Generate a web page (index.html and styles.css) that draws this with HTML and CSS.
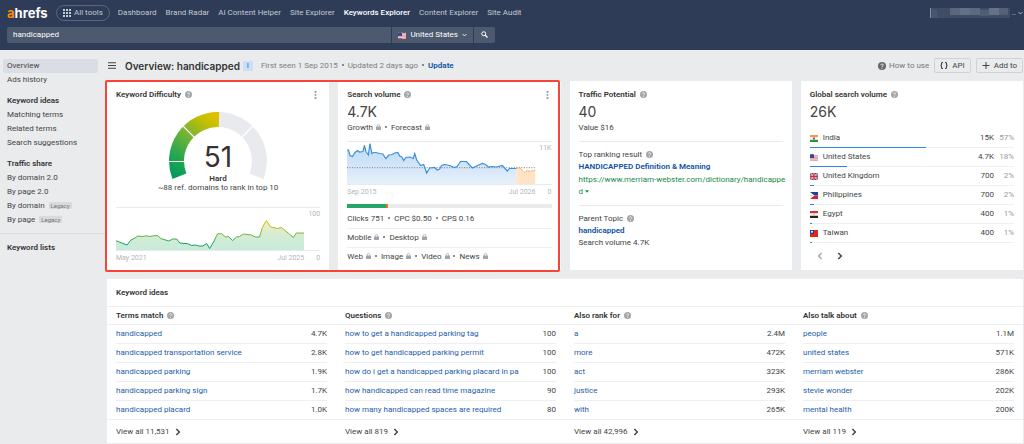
FILE: index.html
```html
<!DOCTYPE html>
<html lang="en">
  <head>
    <meta charset="utf-8">
    <meta name="viewport" content="width=device-width">
    <title>Overview: handicapped</title>
    <link rel="stylesheet" href="styles.css">
  </head>
  <body>
    <svg class="defs" aria-hidden="true">
      <symbol id="help" viewBox="0 0 14 14">
        <circle cx="7" cy="7" r="7" fill="currentColor"/>
        <path d="M4.9 5.6C4.9 2.8 9.2 2.8 9.2 5.5C9.2 7 7 7 7 8.6" fill="none" stroke="#fff" stroke-width="1.5"/>
        <circle cx="7" cy="10.6" r="1" fill="#fff"/>
      </symbol>
      <symbol id="lock" viewBox="0 0 10 12">
        <path d="M2.5 6V3.5a2.5 2.5 0 0 1 5 0V6" fill="none" stroke="currentColor" stroke-width="1.4"/>
        <rect y="5" width="10" height="7" rx="1" fill="currentColor"/>
      </symbol>
      <symbol id="dots" viewBox="0 0 4 14">
        <path d="M.5 0h3v3h-3zM.5 5.500h3v3h-3zM.5 11h3v3h-3z" fill="currentColor"/>
      </symbol>
      <symbol id="next" viewBox="0 0 8 12">
        <path d="M1.500 1.500L6 6L1.500 10.500" fill="none" stroke="currentColor" stroke-width="2.200"/>
      </symbol>
      <symbol id="down" viewBox="0 0 8 6">
        <path d="M1 1.500L4 4.500L7 1.500" fill="none" stroke="currentColor" stroke-width="1.400"/>
      </symbol>
      <symbol id="us" viewBox="0 0 16 14">
        <path d="M0 1Q4-1 8 1T16 1V13Q12 15 8 13T0 13Z" fill="#f3e9ec"/>
        <path d="M8 3.500h8M8 6.500h8M0 9.500h16M0 12.500h16" stroke="#d9606c" stroke-width="1.300"/>
        <path d="M0 1Q4-1 8 1V8H0Z" fill="#3b4a86"/>
      </symbol>
      <symbol id="in" viewBox="0 0 16 14">
        <rect width="16" height="14" fill="#fff"/>
        <rect width="16" height="4.500" fill="#f79a3c"/>
        <rect y="9.500" width="16" height="4.500" fill="#2c9437"/>
        <circle cx="8" cy="7" r="2" fill="#2d3a8c"/>
      </symbol>
      <symbol id="gb" viewBox="0 0 16 14">
        <rect width="16" height="14" fill="#2c3f88"/>
        <path d="M0 0L16 14M16 0L0 14" stroke="#fff" stroke-width="2.400"/>
        <path d="M0 0L16 14M16 0L0 14" stroke="#d22c3c" stroke-width="1"/>
        <path d="M8 0V14M0 7H16" stroke="#fff" stroke-width="4.400"/>
        <path d="M8 0V14M0 7H16" stroke="#d22c3c" stroke-width="3"/>
      </symbol>
      <symbol id="ph" viewBox="0 0 16 14">
        <rect width="16" height="7" fill="#1f3f9f"/>
        <rect y="7" width="16" height="7" fill="#d8202e"/>
        <path d="M0 0L9 7L0 14Z" fill="#fff"/>
        <circle cx="3" cy="7" r="1.600" fill="#f2c230"/>
      </symbol>
      <symbol id="eg" viewBox="0 0 16 14">
        <rect width="16" height="14" fill="#fff"/>
        <rect width="16" height="4.500" fill="#d2303c"/>
        <rect y="9.500" width="16" height="4.500" fill="#222"/>
        <circle cx="8" cy="7" r="1.500" fill="#d9b23c"/>
      </symbol>
      <symbol id="tw" viewBox="0 0 16 14">
        <rect width="16" height="14" fill="#e0261c"/>
        <rect width="8" height="7.500" fill="#2b3a94"/>
        <circle cx="4" cy="3.700" r="2" fill="#fff"/>
      </symbol>
    </svg>

    <header class="top">
      <div class="top-row">
        <a class="logo" href="#"><span>a</span>hrefs</a>
        <button class="all-tools">
          <svg viewBox="0 0 16 16"><path d="M0 0h4v4H0zM6 0h4v4H6zM12 0h4v4h-4zM0 6h4v4H0zM6 6h4v4H6zM12 6h4v4h-4zM0 12h4v4H0zM6 12h4v4H6zM12 12h4v4h-4z" fill="currentColor"/></svg>
          All tools
        </button>
        <nav class="nav">
          <a href="#">Dashboard</a>
          <a href="#">Brand Radar</a>
          <a href="#">AI Content Helper</a>
          <a href="#">Site Explorer</a>
          <a class="active" href="#">Keywords Explorer</a>
          <a href="#">Content Explorer</a>
          <a href="#">Site Audit</a>
        </nav>
        <button class="account" aria-label="Account">
          <svg class="mosaic" viewBox="0 0 80 10">
            <rect width="80" height="10" rx="1" fill="#404d66"/>
            <rect width="1" height="10" fill="#8791a3"/>
            <rect x="2" y="2" width="5" height="8" fill="#4b5770"/>
            <rect x="20" width="10" height="7" fill="#5b667c"/>
            <rect x="30" width="10" height="7" fill="#647085"/>
            <rect x="40" width="10" height="7" fill="#5d697e"/>
            <rect x="50" y="2" width="9" height="6" fill="#505c73"/>
            <rect x="59" width="10" height="7" fill="#667186"/>
            <rect x="69" width="9" height="7" fill="#556178"/>
          </svg>
          <span>..</span>
          <svg class="caret"><use href="#down"/></svg>
        </button>
      </div>
      <form class="search">
        <input type="text" value="handicapped" aria-label="Keyword">
        <button type="button" class="country">
          <svg class="flag"><use href="#us"/></svg>
          United States
          <svg class="caret"><use href="#down"/></svg>
        </button>
        <button type="button" class="go" aria-label="Search">
          <svg viewBox="0 0 14 14"><circle cx="5.500" cy="5.500" r="4" fill="none" stroke="currentColor" stroke-width="2"/><path d="M8.500 8.500L13 13" stroke="currentColor" stroke-width="2.400"/></svg>
        </button>
      </form>
    </header>

    <div class="page">
      <aside class="sidebar">
        <a class="current" href="#">Overview</a>
        <a href="#">Ads history</a>
        <h3>Keyword ideas</h3>
        <a href="#">Matching terms</a>
        <a href="#">Related terms</a>
        <a href="#">Search suggestions</a>
        <h3>Traffic share</h3>
        <a href="#">By domain 2.0</a>
        <a href="#">By page 2.0</a>
        <a href="#">By domain <span class="legacy">Legacy</span></a>
        <a href="#">By page <span class="legacy">Legacy</span></a>
        <hr>
        <h3>Keyword lists</h3>
      </aside>

      <main>
        <div class="title-row">
          <button class="menu" aria-label="Menu">
            <svg viewBox="0 0 16 14"><path d="M0 1.500h16M0 7h16M0 12.500h16" stroke="currentColor" stroke-width="2"/></svg>
          </button>
          <h1>Overview: handicapped</h1>
          <span class="intent">I</span>
          <p class="seen">First seen 1 Sep 2015 <i></i> Updated 2 days ago <i></i> <a href="#">Update</a></p>
          <a class="how" href="#"><svg class="help"><use href="#help"/></svg>How to use</a>
          <button class="btn">
            <svg viewBox="0 0 16 14"><path d="M6 1H5Q3 1 3 3V5Q3 7 1 7Q3 7 3 9V11Q3 13 5 13H6M10 1H11Q13 1 13 3V5Q13 7 15 7Q13 7 13 9V11Q13 13 11 13H10" fill="none" stroke="currentColor" stroke-width="2.200"/></svg>
            API
          </button>
          <button class="btn add">
            <svg viewBox="0 0 14 14"><path d="M7 0V14M0 7H14" stroke="currentColor" stroke-width="2"/></svg>
            Add to
          </button>
        </div>

        <div class="cards">
          <section class="card">
            <h2>Keyword Difficulty <svg class="help"><use href="#help"/></svg></h2>
            <button class="more" aria-label="More"><svg><use href="#dots"/></svg></button>
            <svg class="gauge" viewBox="0 0 98 70">
              <defs>
                <linearGradient id="kd" gradientUnits="userSpaceOnUse" x1="6" y1="64" x2="50" y2="6">
                  <stop offset="0" stop-color="#009b5c"/>
                  <stop offset=".25" stop-color="#27a84f"/>
                  <stop offset=".6" stop-color="#82b530"/>
                  <stop offset=".85" stop-color="#c4c000"/>
                  <stop offset="1" stop-color="#dfc000"/>
                </linearGradient>
              </defs>
              <path d="M50 7.500A41.500 41.500 0 0 1 87.600 64.200" fill="none" stroke="#e9eaed" stroke-width="15"/>
              <path d="M10.400 64.200A41.500 41.500 0 0 1 50 7.500" fill="none" stroke="url(#kd)" stroke-width="15"/>
              <path d="M0 49.500H16M14 14L26 26M84 14L72 26" stroke="#fff" stroke-width="1.200"/>
              <text class="score" x="49" y="55">51</text>
              <text class="level" x="49" y="69">Hard</text>
            </svg>
            <p class="refs">~88 ref. domains to rank in top 10</p>
            <div class="chart">
              <svg viewBox="0 0 189 42" preserveAspectRatio="none">
                <defs>
                  <linearGradient id="kdline" gradientUnits="userSpaceOnUse" x1="0" y1="12" x2="0" y2="40">
                    <stop offset="0" stop-color="#e2bf00"/>
                    <stop offset=".35" stop-color="#9aba28"/>
                    <stop offset=".6" stop-color="#58b044"/>
                    <stop offset=".85" stop-color="#0ba05d"/>
                  </linearGradient>
                  <linearGradient id="kdarea" x1="0" y1="0" x2="0" y2="1">
                    <stop offset="0" stop-color="#f6eec0"/>
                    <stop offset=".5" stop-color="#d5ecd3"/>
                    <stop offset="1" stop-color="#c8eadc"/>
                  </linearGradient>
                </defs>
                <path d="M0 32.700L11 37L15 32L19 30L22 28L27 28.500L30 27.700L34 28.500L38 27.700H42L45 30.500L53 33L57 31H61L64 35L72 35.700L76 37.500L80 37L83 38H87L91 35.500L94 40.500L98 34L102 25.700H106L110 29L113 28.500L117 32.500L121 29L124 28.500L128 26L136 27L140 29H144L147 19.500L151 12.500L155 18.700L162 20.500L166 19.500L174 26L178 29.500L181 25H189V42H0Z" fill="url(#kdarea)"/>
                <path d="M0 32.700L11 37L15 32L19 30L22 28L27 28.500L30 27.700L34 28.500L38 27.700H42L45 30.500L53 33L57 31H61L64 35L72 35.700L76 37.500L80 37L83 38H87L91 35.500L94 40.500L98 34L102 25.700H106L110 29L113 28.500L117 32.500L121 29L124 28.500L128 26L136 27L140 29H144L147 19.500L151 12.500L155 18.700L162 20.500L166 19.500L174 26L178 29.500L181 25H189" fill="none" stroke="url(#kdline)"/>
              </svg>
              <span>100</span>
            </div>
            <div class="axis"><span>May 2021</span><span>Jul 2025</span><span>0</span></div>
          </section>

          <section class="card">
            <h2>Search volume <svg class="help"><use href="#help"/></svg></h2>
            <button class="more" aria-label="More"><svg><use href="#dots"/></svg></button>
            <p class="big">4.7K</p>
            <p class="line">Growth <svg class="lock"><use href="#lock"/></svg> <i></i> Forecast <svg class="lock"><use href="#lock"/></svg></p>
            <div class="chart volume">
              <svg viewBox="0 0 189 42" preserveAspectRatio="none">
                <defs>
                  <linearGradient id="svarea" x1="0" y1="0" x2="0" y2="1">
                    <stop offset="0" stop-color="#bcd9f5"/>
                    <stop offset="1" stop-color="#e6f0fb"/>
                  </linearGradient>
                </defs>
                <path d="M0 8L1.500 8L3 13.500L5.500 14.500L8 10.500L10.500 8.500L12.500 10L16 9.500L17.500 3.500L19 9.500L21.500 13L23 1.500L25 11.500L27 10.500H29L33 11.500L36 12L39 16.500L42 13L45 12.500L48 11L51 10.500L53 14L55 15L57 18.500L59 15.500L63 15L66.500 16.500L68 11.500L70 18L74 23.500L77 22.500L80 31L83 26L88 25.500L90.500 28L93 27L95 23.500L98 22.500L103 23.500L108 25.500L110.500 24.500L114 19.500H120L122.500 22.500L126 26L131 23.500L136 21.500L139 22.500L142 25L146 24.500L150 25L156 23.500L161 29L163 26.500H170V42H0Z" fill="url(#svarea)"/>
                <path d="M170 26.500L173 25.500L178 30.500L181 28.500L184 29.500L189 28V42H170Z" fill="#fee3c6"/>
                <path d="M0 25.700H189" stroke="#6b7c8e" stroke-dasharray="1 1.500"/>
                <path d="M0 8L1.500 8L3 13.500L5.500 14.500L8 10.500L10.500 8.500L12.500 10L16 9.500L17.500 3.500L19 9.500L21.500 13L23 1.500L25 11.500L27 10.500H29L33 11.500L36 12L39 16.500L42 13L45 12.500L48 11L51 10.500L53 14L55 15L57 18.500L59 15.500L63 15L66.500 16.500L68 11.500L70 18L74 23.500L77 22.500L80 31L83 26L88 25.500L90.500 28L93 27L95 23.500L98 22.500L103 23.500L108 25.500L110.500 24.500L114 19.500H120L122.500 22.500L126 26L131 23.500L136 21.500L139 22.500L142 25L146 24.500L150 25L156 23.500L161 29L163 26.500H170" fill="none" stroke="#3d8fdc" stroke-width="1.200"/>
                <path d="M170 26.500L173 25.500L178 30.500L181 28.500L184 29.500L189 28" fill="none" stroke="#f99a35" stroke-dasharray="2 1"/>
              </svg>
              <span>11K</span>
            </div>
            <div class="axis"><span>Sep 2015</span><span>Jul 2026</span><span>0</span></div>
            <div class="clicks"><span class="organic" style="width: 19%"></span><span class="paid" style="width: 1%"></span></div>
            <p class="line">Clicks 751 <i></i> CPC $0.50 <i></i> CPS 0.16</p>
            <p class="line split first">Mobile <svg class="lock"><use href="#lock"/></svg> <i></i> Desktop <svg class="lock"><use href="#lock"/></svg></p>
            <p class="line split">Web <svg class="lock"><use href="#lock"/></svg> <i></i> Image <svg class="lock"><use href="#lock"/></svg> <i></i> Video <svg class="lock"><use href="#lock"/></svg> <i></i> News <svg class="lock"><use href="#lock"/></svg></p>
          </section>

          <section class="card">
            <h2>Traffic Potential <svg class="help"><use href="#help"/></svg></h2>
            <p class="big">40</p>
            <p class="line">Value $16</p>
            <div class="part">
              <p class="line">Top ranking result <svg class="help"><use href="#help"/></svg></p>
              <a class="strong" href="#">HANDICAPPED Definition &amp; Meaning</a>
              <a class="url" href="#">https://www.merriam-webster.com/dictionary/handicapped <svg viewBox="0 0 10 6"><path d="M0 0H10L5 6Z" fill="currentColor"/></svg></a>
            </div>
            <div class="part">
              <p class="line">Parent Topic <svg class="help"><use href="#help"/></svg></p>
              <a class="strong" href="#">handicapped</a>
              <p>Search volume 4.7K</p>
            </div>
          </section>

          <section class="card">
            <h2>Global search volume <svg class="help"><use href="#help"/></svg></h2>
            <p class="big">26K</p>
            <table class="countries">
              <tr><td><svg class="flag"><use href="#in"/></svg>India</td><td>15K</td><td>57%<span class="bar" style="width: 57%"></span></td></tr>
              <tr><td><svg class="flag"><use href="#us"/></svg>United States</td><td>4.7K</td><td>18%<span class="bar" style="width: 18%"></span></td></tr>
              <tr><td><svg class="flag"><use href="#gb"/></svg>United Kingdom</td><td>700</td><td>2%<span class="bar" style="width: 2%"></span></td></tr>
              <tr><td><svg class="flag"><use href="#ph"/></svg>Philippines</td><td>700</td><td>2%<span class="bar" style="width: 2%"></span></td></tr>
              <tr><td><svg class="flag"><use href="#eg"/></svg>Egypt</td><td>400</td><td>1%<span class="bar" style="width: 1%"></span></td></tr>
              <tr><td><svg class="flag"><use href="#tw"/></svg>Taiwan</td><td>400</td><td>1%<span class="bar" style="width: 1%"></span></td></tr>
            </table>
            <div class="pager">
              <button class="prev" aria-label="Previous" disabled><svg class="arrow"><use href="#next"/></svg></button>
              <button aria-label="Next"><svg class="arrow"><use href="#next"/></svg></button>
            </div>
          </section>

          <div class="highlight"></div>
        </div>

        <section class="ideas">
          <h2>Keyword ideas</h2>
          <div class="columns">
            <div class="column">
              <h3>Terms match <svg class="help"><use href="#help"/></svg></h3>
              <table>
                <tr><td><a href="#">handicapped</a></td><td>4.7K</td></tr>
                <tr><td><a href="#">handicapped transportation service</a></td><td>2.8K</td></tr>
                <tr><td><a href="#">handicapped parking</a></td><td>1.9K</td></tr>
                <tr><td><a href="#">handicapped parking sign</a></td><td>1.7K</td></tr>
                <tr><td><a href="#">handicapped placard</a></td><td>1.0K</td></tr>
              </table>
              <a class="all" href="#">View all 11,531 <svg class="arrow"><use href="#next"/></svg></a>
            </div>
            <div class="column">
              <h3>Questions <svg class="help"><use href="#help"/></svg></h3>
              <table>
                <tr><td><a href="#">how to get a handicapped parking tag</a></td><td>100</td></tr>
                <tr><td><a href="#">how to get handicapped parking permit</a></td><td>100</td></tr>
                <tr><td><a href="#">how do i get a handicapped parking placard in pa</a></td><td>100</td></tr>
                <tr><td><a href="#">how handicapped can read time magazine</a></td><td>90</td></tr>
                <tr><td><a href="#">how many handicapped spaces are required</a></td><td>80</td></tr>
              </table>
              <a class="all" href="#">View all 819 <svg class="arrow"><use href="#next"/></svg></a>
            </div>
            <div class="column">
              <h3>Also rank for <svg class="help"><use href="#help"/></svg></h3>
              <table>
                <tr><td><a href="#">a</a></td><td>2.4M</td></tr>
                <tr><td><a href="#">more</a></td><td>472K</td></tr>
                <tr><td><a href="#">act</a></td><td>323K</td></tr>
                <tr><td><a href="#">justice</a></td><td>293K</td></tr>
                <tr><td><a href="#">with</a></td><td>265K</td></tr>
              </table>
              <a class="all" href="#">View all 42,996 <svg class="arrow"><use href="#next"/></svg></a>
            </div>
            <div class="column">
              <h3>Also talk about <svg class="help"><use href="#help"/></svg></h3>
              <table>
                <tr><td><a href="#">people</a></td><td>1.1M</td></tr>
                <tr><td><a href="#">united states</a></td><td>571K</td></tr>
                <tr><td><a href="#">merriam webster</a></td><td>286K</td></tr>
                <tr><td><a href="#">stevie wonder</a></td><td>202K</td></tr>
                <tr><td><a href="#">mental health</a></td><td>200K</td></tr>
              </table>
              <a class="all" href="#">View all 119 <svg class="arrow"><use href="#next"/></svg></a>
            </div>
          </div>
        </section>
      </main>
    </div>
  </body>
</html>
```

FILE: styles.css
```css
* {
  box-sizing: border-box;
  margin: 0;
  padding: 0;
}
body {
  background: #e9ebed;
  color: #444;
  font: 8px/12px Roboto, "Liberation Sans", sans-serif;
}
button, input {
  background: none;
  border: 0;
  color: inherit;
  font: inherit;
}
a {
  color: inherit;
  text-decoration: none;
}
h1, h2, h3 {
  color: #333;
  font-size: 8px;
  font-weight: 600;
}
.defs {
  position: absolute;
  width: 0;
  height: 0;
}
i {
  display: inline-block;
  width: 2px;
  height: 2px;
  margin: 0 2px;
  border-radius: 1px;
  background: #666;
  vertical-align: 2px;
}

/* icons */
.help {
  width: 7px;
  height: 7px;
  margin-left: 2px;
  color: #a3a5a8;
  vertical-align: -1px;
}
.lock {
  width: 5px;
  height: 6px;
  margin-left: 1px;
  color: #a3a5a8;
  vertical-align: 0;
}
.flag {
  width: 8px;
  height: 7px;
}
.caret {
  width: 5px;
  height: 4px;
}
.arrow {
  width: 6px;
  height: 8px;
}

/* header */
.top {
  height: 50px;
  padding: 4px 4px 0 7px;
  background: #2e3c57;
}
.top-row {
  display: flex;
  align-items: center;
  height: 17px;
  color: #c3c9d3;
}
.logo {
  width: 49px;
  color: #fff;
  font-family: Inter, sans-serif;
  font-size: 13px;
  font-weight: 700;
}
.logo span {
  color: #ff8800;
}
.all-tools {
  display: flex;
  align-items: center;
  gap: 3px;
  height: 16px;
  padding: 0 6px;
  border: 1px solid #5b677d;
  border-radius: 8px;
}
.all-tools svg {
  width: 8px;
  height: 8px;
}
.nav {
  display: flex;
  gap: 9px;
  margin-left: 8px;
}
.nav .active {
  color: #fff;
  font-weight: 500;
}
.account {
  display: flex;
  align-items: center;
  gap: 2px;
  margin-left: auto;
}
.account .caret {
  margin-right: -3px;
}
.mosaic {
  width: 80px;
  height: 10px;
}
.search {
  display: flex;
  gap: 1px;
  width: 488px;
  height: 16px;
  margin-top: 6px;
  color: #fff;
}
.search > * {
  background: #4d596f;
}
.search input {
  flex: 1;
  padding: 0 6px;
  border-radius: 2px 0 0 2px;
}
.country {
  display: flex;
  align-items: center;
  gap: 4px;
  padding: 0 6px;
}
.go {
  width: 21px;
  border-radius: 0 2px 2px 0;
}
.go svg {
  width: 7px;
  height: 7px;
  vertical-align: middle;
}

/* sidebar */
.page {
  display: flex;
}
.sidebar {
  width: 105px;
  padding-top: 9px;
  line-height: 14px;
}
.sidebar a {
  display: block;
  margin: 0 7px 0 3px;
  padding-left: 4px;
}
.sidebar .current {
  border-radius: 2px;
  background: #dadde3;
}
.sidebar h3 {
  margin-top: 7px;
  padding-left: 7px;
}
.sidebar hr {
  margin-top: 6px;
  border: 0;
  border-top: 1px solid #d8dadd;
}
.legacy {
  display: inline-block;
  margin-left: 2px;
  padding: 0 2px;
  border-radius: 1px;
  background: #d8dadd;
  color: #777;
  font-size: 6px;
  line-height: 7px;
}

/* page title */
main {
  flex: 1;
  min-width: 0;
  padding: 0 1px 1px 2px;
}
.title-row {
  display: flex;
  align-items: center;
  height: 31px;
}
.menu {
  width: 9px;
  height: 8px;
  margin: 0 8px 0 1px;
}
.menu svg {
  display: block;
  width: 8px;
  height: 7px;
}
h1 {
  font-family: Inter, sans-serif;
  font-size: 10px;
}
.intent {
  width: 10px;
  margin: 0 8px 0 3px;
  border-radius: 1px;
  background: #c8dff5;
  color: #3c6c9c;
  line-height: 10px;
  text-align: center;
}
.seen {
  color: #7c7e81;
}
.seen a {
  color: #0b50a5;
  font-weight: 600;
}
.how {
  display: flex;
  align-items: center;
  gap: 3px;
  margin-left: auto;
  color: #75777a;
}
.how .help {
  width: 8px;
  height: 8px;
  color: #66686b;
}
.btn {
  display: flex;
  align-items: center;
  gap: 4px;
  height: 15px;
  margin-left: 5px;
  padding: 0 5px;
  border: 1px solid #d0d2d5;
  border-radius: 2px;
}
.btn svg {
  width: 8px;
  height: 7px;
}

/* cards */
.cards {
  position: relative;
  display: grid;
  grid-template-columns: repeat(4, minmax(0, 1fr));
  gap: 9px;
}
.card {
  position: relative;
  padding: 8px 9px 4px;
  background: #fff;
}
.more {
  position: absolute;
  top: 10px;
  right: 12px;
  color: #8a8c8f;
}
.more svg {
  display: block;
  width: 3px;
  height: 8px;
}
.highlight {
  position: absolute;
  top: -1px;
  bottom: -2px;
  left: -2px;
  width: calc(50% - 3px);
  border: 2px solid #f9423a;
  border-radius: 2px;
  pointer-events: none;
}
.big {
  margin-top: 1px;
  font-family: Inter, sans-serif;
  font-size: 14px;
  line-height: 20px;
}
.gauge {
  display: block;
  width: 98px;
  height: 70px;
  margin: 11px auto 0;
  fill: #333;
  text-anchor: middle;
}
.score {
  font-family: Inter, sans-serif;
  font-size: 28px;
}
.level {
  font-size: 8px;
  font-weight: 600;
}
.refs {
  margin-bottom: 13px;
  text-align: center;
}
.chart {
  display: flex;
  height: 44px;
  border: solid #e9eaec;
  border-width: 1px 0;
}
.volume {
  margin-top: 7px;
}
.chart svg {
  flex: 1;
  min-width: 0;
  height: 42px;
}
.chart span {
  width: 16px;
  color: #b3b5b8;
  font-size: 7px;
  text-align: right;
}
.axis {
  display: flex;
  margin-top: 1px;
  color: #b3b5b8;
  font-size: 7px;
}
.axis span:nth-child(2) {
  margin-left: auto;
}
.axis span:last-child {
  width: 16px;
  text-align: right;
}
.clicks {
  display: flex;
  height: 4px;
  margin: 6px 0 5px;
  background: #e8eaec;
}
.organic {
  background: #27a567;
}
.paid {
  background: #fa6e14;
}
.split {
  border-top: 1px solid #eeeff0;
  line-height: 18px;
}
.split.first {
  margin-top: 3px;
}
.part {
  margin-top: 7px;
  padding-top: 7px;
  border-top: 1px solid #e9eaec;
}
.part a {
  display: block;
}
.part .strong {
  color: #0b50a5;
  font-weight: 600;
}
.url {
  margin: 1px -5px 0 0;
  color: #168a46;
  word-break: break-all;
}
.url svg {
  width: 4px;
  height: 3px;
  vertical-align: 1px;
}

table {
  width: 100%;
  border-spacing: 0;
}
td {
  height: 19px;
  border-bottom: 1px solid #eeeff0;
}
td:last-child {
  text-align: right;
}
.countries {
  margin-top: 7px;
}
.countries tr {
  position: relative;
}
.countries td:nth-child(2) {
  text-align: right;
}
.countries td:last-child {
  width: 20px;
  color: #97999c;
}
.countries .flag {
  margin-right: 5px;
  vertical-align: -2px;
}
.bar {
  position: absolute;
  bottom: 0;
  left: 0;
  height: 1px;
  background: #2f86dc;
}
.pager {
  display: flex;
  gap: 14px;
  margin-top: 9px;
  padding-left: 7px;
}
.pager button {
  width: 6px;
  height: 8px;
}
.pager .arrow {
  display: block;
}
.prev {
  color: #a5a7aa;
  transform: scaleX(-1);
}

/* keyword ideas */
.ideas {
  margin-top: 9px;
  background: #fff;
}
.ideas h2 {
  padding-left: 9px;
  border-bottom: 1px solid #eeeff0;
  line-height: 27px;
}
.columns {
  display: grid;
  grid-template-columns: repeat(4, minmax(0, 1fr));
}
.column h3 {
  padding-left: 9px;
  border-bottom: 1px solid #eeeff0;
  line-height: 17px;
}
.column table {
  width: calc(100% - 18px);
  margin: 0 9px;
}
.column td {
  white-space: nowrap;
}
.column tr:last-child td {
  height: 18px;
  border: 0;
}
.column td a {
  color: #1d5cab;
}
.all {
  display: block;
  padding-left: 9px;
  border-top: 1px solid #eeeff0;
  line-height: 23px;
}
.all .arrow {
  margin-left: 3px;
  vertical-align: -2px;
}
```
